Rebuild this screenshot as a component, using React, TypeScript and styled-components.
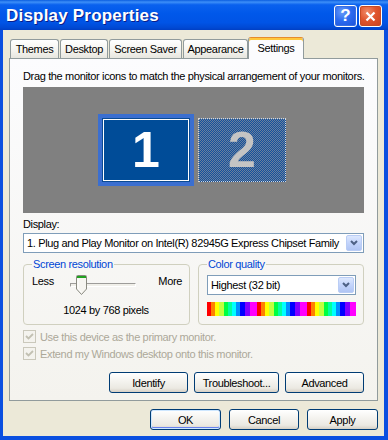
import styled, { createGlobalStyle } from "styled-components";

const Global = createGlobalStyle`
  html, body { margin: 0; padding: 0; background: #fff; }
  * { box-sizing: border-box; }
  body {
    font-family: "Liberation Sans", Arial, sans-serif;
    font-size: 11px;
    letter-spacing: -0.35px;
    color: #000;
  }
`;

const Window = styled.div`
  width: 388px;
  height: 440px;
  display: flex;
  flex-direction: column;
  background: #0a4fe0;
  overflow: hidden;
`;

const TitleBar = styled.div`
  height: 30px;
  flex: none;
  display: flex;
  align-items: center;
  padding: 0 6px 0 6px;
  background: linear-gradient(
    to bottom,
    #0b5ee0 0%,
    #3d8ff8 7%,
    #0a61ee 16%,
    #0058ea 45%,
    #0054e6 75%,
    #0049d4 92%,
    #003fc4 100%
  );
`;

const Title = styled.div`
  flex: 1;
  color: #fff;
  font-weight: bold;
  font-size: 17px;
  letter-spacing: 0.2px;
  text-shadow: 1px 1px 0 #0a1e8a;
  margin-top: 2px;
`;

const CapButton = styled.div<{ $red?: boolean }>`
  width: 23px;
  height: 22px;
  margin-left: 2px;
  margin-top: 2px;
  border: 1px solid #fff;
  border-radius: 3px;
  display: flex;
  align-items: center;
  justify-content: center;
  color: #fff;
  font-weight: bold;
  font-size: 17px;
  letter-spacing: 0;
  background: ${(p) =>
    p.$red
      ? "radial-gradient(circle at 35% 30%, #f08c6a 0%, #e0542c 45%, #c8401c 100%)"
      : "radial-gradient(circle at 35% 30%, #6a9cf8 0%, #2b6bf0 45%, #1b50d8 100%)"};
  box-shadow: inset 0 0 0 1px ${(p) => (p.$red ? "#c54b26" : "#3a6fe0")};
`;

const Frame = styled.div`
  flex: 1;
  margin: 0 4px 4px 3px;
  background: #ece9d8;
  padding: 7px 6px 0 6px;
  display: flex;
  flex-direction: column;
`;

const TabRow = styled.div`
  height: 22px;
  display: flex;
  align-items: flex-start;
  gap: 1px;
  padding-left: 1px;
  position: relative;
  z-index: 1;
`;

const Tab = styled.div<{ $w: number; $selected?: boolean }>`
  width: ${(p) => p.$w}px;
  height: ${(p) => (p.$selected ? 22 : 19)}px;
  margin-top: ${(p) => (p.$selected ? 0 : 2)}px;
  margin-left: ${(p) => (p.$selected ? -1 : 0)}px;
  border: 1px solid #919b9c;
  border-bottom: none;
  border-top: ${(p) => (p.$selected ? "1px solid #e68b2c" : "1px solid #919b9c")};
  border-radius: 3px 3px 0 0;
  box-shadow: ${(p) => (p.$selected ? "inset 0 2px 0 #ffc73c" : "none")};
  background: ${(p) =>
    p.$selected ? "#fcfcfe" : "linear-gradient(to bottom, #ffffff 0%, #f4f3ee 60%, #e7e6df 100%)"};
  display: flex;
  align-items: ${(p) => (p.$selected ? "flex-start" : "center")};
  padding-top: ${(p) => (p.$selected ? 4 : 0)}px;
  justify-content: center;
  white-space: nowrap;
`;

const Panel = styled.div`
  margin-top: -1px;
  height: 343px;
  border: 1px solid #919b9c;
  background: linear-gradient(to bottom, #fcfcfe 0%, #f4f3ee 100%);
  padding: 11px 13px 0 13px;
  display: flex;
  flex-direction: column;
`;

const Text = styled.div`
  line-height: 13px;
  white-space: nowrap;
`;

const Arrangement = styled.div`
  margin-top: 4px;
  height: 126px;
  background: #808080;
  display: flex;
  align-items: center;
  justify-content: center;
  gap: 4px;
  padding-right: 3px;
`;

const Selection = styled.div`
  width: 96px;
  height: 72px;
  padding: 4px;
  background: #3b6fd0;
`;

const MonitorFace = styled.div<{ $ghost?: boolean }>`
  width: 88px;
  height: 64px;
  display: flex;
  align-items: center;
  justify-content: center;
  font-weight: bold;
  font-size: 50px;
  letter-spacing: 0;
  line-height: 1;
  ${(p) =>
    p.$ghost
      ? `
    border: 1px dotted #d8d8d8;
    background-color: #3f6692;
    background-image: conic-gradient(#12509e 25%, #6a809c 0 50%, #12509e 0 75%, #6a809c 0);
    background-size: 2px 2px;
    color: #c4c4c4;
  `
      : `
    border: 1px solid #0a4a93;
    background: #004c98;
    box-shadow: inset 0 0 0 1px #ffffff;
    color: #fff;
  `}
`;

const Label = styled(Text)`
  margin-top: 5px;
`;

const Combo = styled.div<{ $mt: number }>`
  margin-top: ${(p) => p.$mt}px;
  height: 20px;
  border: 1px solid #7f9db9;
  background: #fff;
  display: flex;
  align-items: center;
  padding: 0 1px 0 3px;
`;

const ComboText = styled.span`
  flex: 1;
  white-space: nowrap;
  overflow: hidden;
`;

const DropButton = styled.div`
  width: 16px;
  height: 16px;
  border-radius: 2px;
  border: 1px solid #bacdf5;
  background: linear-gradient(to bottom, #dde8fe 0%, #c3d4fb 50%, #b0c5f4 100%);
  display: flex;
  align-items: center;
  justify-content: center;
`;

const Groups = styled.div`
  margin-top: 5px;
  display: grid;
  grid-template-columns: 167px 166px;
  gap: 8px;
  justify-content: space-between;
`;

const Group = styled.fieldset`
  margin: 0;
  padding: 0 7px 7px 8px;
  border: 1px solid #d0d0bf;
  border-radius: 4px;
  height: 67px;
  min-width: 0;
`;

const Legend = styled.legend`
  color: #0046d5;
  padding: 0 1px;
  margin-left: 0;
  line-height: 13px;
`;

const SliderRow = styled.div`
  margin-top: 4px;
  height: 22px;
  display: flex;
  align-items: flex-start;
`;

const Slider = styled.div`
  position: relative;
  width: 66px;
  height: 22px;
  margin-left: 16px;
  margin-right: auto;
`;

const Track = styled.div`
  margin-top: 8px;
  height: 4px;
  border-top: 1px solid #9d9c99;
  border-left: 1px solid #9d9c99;
  border-bottom: 1px solid #fff;
  border-right: 1px solid #fff;
  background: #f0efe9;
`;

const Thumb = styled.svg`
  position: absolute;
  left: 6px;
  top: 0;
`;

const Pixels = styled(Text)`
  margin-top: 7px;
  text-align: center;
  padding-right: 2px;
`;

const ColorBar = styled.div`
  margin-top: 7px;
  height: 14px;
  background: repeating-linear-gradient(
    to right,
    #ff0000 0 4px,
    #ff8000 4px 8px,
    #ffff00 8px 12px,
    #c0ff40 12px 17px,
    #00ff40 17px 21px,
    #00ffa0 21px 25px,
    #00ffff 25px 29px,
    #0090ff 29px 33px,
    #0000ff 33px 38px,
    #8000ff 38px 43px,
    #ff00ff 43px 50px
  );
`;

const CheckRow = styled.div<{ $mt: number }>`
  margin-top: ${(p) => p.$mt}px;
  height: 13px;
  display: flex;
  align-items: center;
  gap: 4px;
  color: #aca899;
`;

const CheckBox = styled.div`
  width: 13px;
  height: 13px;
  border: 1px solid #cac8bb;
  background: #f4f3ee;
  display: flex;
  align-items: center;
  justify-content: center;
`;

const ButtonRow = styled.div<{ $mt: number }>`
  margin-top: ${(p) => p.$mt}px;
  display: flex;
  justify-content: flex-end;
  gap: 6px;
`;

const Button = styled.div<{ $w: number; $default?: boolean }>`
  width: ${(p) => p.$w}px;
  height: 21px;
  border: 1px solid #003c74;
  border-radius: 3px;
  background: linear-gradient(to bottom, #ffffff 0%, #f5f4f0 40%, #ebe9e2 80%, #d6d0c5 100%);
  box-shadow: ${(p) =>
    p.$default ? "inset 0 0 0 1px #cee7ff, inset 0 -1px 0 1px #6982ee" : "none"};
  display: flex;
  align-items: center;
  justify-content: center;
  white-space: nowrap;
`;

const Footer = styled.div`
  margin-top: 8px;
  display: flex;
  justify-content: flex-end;
  gap: 8px;
`;

const Chevron = () => (
  <svg width="8" height="6" viewBox="0 0 8 6">
    <path d="M1 1 L4 4 L7 1" stroke="#4d6185" strokeWidth="2" fill="none" />
  </svg>
);

const Tick = () => (
  <svg width="9" height="9" viewBox="0 0 9 9">
    <path d="M1 4 L3.5 6.5 L8 2" stroke="#c2c0b2" strokeWidth="1.8" fill="none" />
  </svg>
);

export default function App() {
  const tabs = [
    { name: "Themes", w: 49 },
    { name: "Desktop", w: 48 },
    { name: "Screen Saver", w: 73 },
    { name: "Appearance", w: 65 },
  ];

  return (
    <>
      <Global />
      <Window>
        <TitleBar>
          <Title>Display Properties</Title>
          <CapButton>?</CapButton>
          <CapButton $red>
            <svg width="11" height="11" viewBox="0 0 11 11">
              <path d="M1.5 1.5 L9.5 9.5 M9.5 1.5 L1.5 9.5" stroke="#fff" strokeWidth="2.2" />
            </svg>
          </CapButton>
        </TitleBar>
        <Frame>
          <TabRow>
            {tabs.map((t) => (
              <Tab key={t.name} $w={t.w}>
                {t.name}
              </Tab>
            ))}
            <Tab $w={56} $selected>
              Settings
            </Tab>
          </TabRow>
          <Panel>
            <Text>Drag the monitor icons to match the physical arrangement of your monitors.</Text>
            <Arrangement>
              <Selection>
                <MonitorFace>1</MonitorFace>
              </Selection>
              <MonitorFace $ghost>2</MonitorFace>
            </Arrangement>

            <Label>Display:</Label>
            <Combo $mt={2}>
              <ComboText>1. Plug and Play Monitor on Intel(R) 82945G Express Chipset Family</ComboText>
              <DropButton>
                <Chevron />
              </DropButton>
            </Combo>

            <Groups>
              <Group>
                <Legend>Screen resolution</Legend>
                <SliderRow>
                  <Text>Less</Text>
                  <Slider>
                    <Track />
                    <Thumb width="11" height="20" viewBox="0 0 11 20">
                      <path d="M0.5 1.5 Q0.5 0.5 1.5 0.5 H9.5 Q10.5 0.5 10.5 1.5 V14 L5.5 19.5 L0.5 14 Z" fill="#f6f5f0" stroke="#8a8a80" />
                      <rect x="1" y="1" width="9" height="2" fill="#21a121" />
                      <path d="M2 4 V13.5 L5.5 17.5" stroke="#fff" fill="none" />
                    </Thumb>
                  </Slider>
                  <Text>More</Text>
                </SliderRow>
                <Pixels>1024 by 768 pixels</Pixels>
              </Group>
              <Group>
                <Legend>Color quality</Legend>
                <Combo $mt={4}>
                  <ComboText>Highest (32 bit)</ComboText>
                  <DropButton>
                    <Chevron />
                  </DropButton>
                </Combo>
                <ColorBar />
              </Group>
            </Groups>

            <CheckRow $mt={5}>
              <CheckBox>
                <Tick />
              </CheckBox>
              <span>Use this device as the primary monitor.</span>
            </CheckRow>
            <CheckRow $mt={4}>
              <CheckBox>
                <Tick />
              </CheckBox>
              <span>Extend my Windows desktop onto this monitor.</span>
            </CheckRow>

            <ButtonRow $mt={12}>
              <Button $w={79}>Identify</Button>
              <Button $w={85}>Troubleshoot...</Button>
              <Button $w={79}>Advanced</Button>
            </ButtonRow>
          </Panel>
          <Footer>
            <Button $w={71} $default>
              OK
            </Button>
            <Button $w={70}>Cancel</Button>
            <Button $w={71}>Apply</Button>
          </Footer>
        </Frame>
      </Window>
    </>
  );
}
